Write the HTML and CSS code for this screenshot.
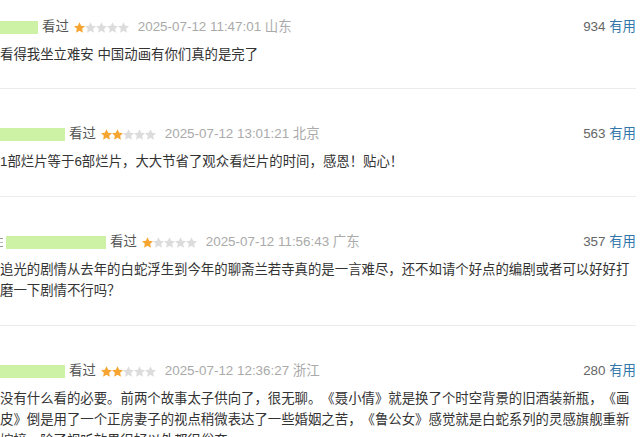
FILE: index.html
```html
<!DOCTYPE html>
<html lang="zh-CN">
<head>
    <meta charset="UTF-8">
    <meta name="viewport" content="width=device-width, initial-scale=1.0">
    <title>短评</title>
    <link rel="stylesheet" href="styles.css">
</head>
<body>
    <svg class="defs" width="0" height="0">
        <defs>
            <polygon id="star" points="5.5,0.2 7.15,3.73 11.02,4.21 8.16,6.87 8.91,10.69 5.5,8.8 2.09,10.69 2.84,6.87 0,4.21 3.85,3.73"/>
        </defs>
    </svg>

    <div class="comments">
        <div class="comment">
            <div class="comment-info">
                <span class="user"><span class="mask mask-s"></span></span>
                <span class="status">看过</span>
                <span class="rating">
                    <svg width="56" height="11" viewBox="0 0 56 11">
                        <use href="#star" class="on"/>
                        <use href="#star" x="11" class="off"/>
                        <use href="#star" x="22" class="off"/>
                        <use href="#star" x="33" class="off"/>
                        <use href="#star" x="44" class="off"/>
                    </svg>
                </span>
                <span class="time">2025-07-12 11:47:01 山东</span>
                <span class="votes"><span class="count">934</span> <a class="useful">有用</a></span>
            </div>
            <p class="comment-text">看得我坐立难安 中国动画有你们真的是完了</p>
        </div>

        <div class="comment">
            <div class="comment-info">
                <span class="user"><span class="mask mask-m"></span></span>
                <span class="status">看过</span>
                <span class="rating">
                    <svg width="56" height="11" viewBox="0 0 56 11">
                        <use href="#star" class="on"/>
                        <use href="#star" x="11" class="on"/>
                        <use href="#star" x="22" class="off"/>
                        <use href="#star" x="33" class="off"/>
                        <use href="#star" x="44" class="off"/>
                    </svg>
                </span>
                <span class="time">2025-07-12 13:01:21 北京</span>
                <span class="votes"><span class="count">563</span> <a class="useful">有用</a></span>
            </div>
            <p class="comment-text">1部烂片等于6部烂片，大大节省了观众看烂片的时间，感恩！贴心！</p>
        </div>

        <div class="comment">
            <div class="comment-info">
                <span class="user"><span class="avatar-bit"></span><span class="mask mask-l"></span></span>
                <span class="status">看过</span>
                <span class="rating">
                    <svg width="56" height="11" viewBox="0 0 56 11">
                        <use href="#star" class="on"/>
                        <use href="#star" x="11" class="off"/>
                        <use href="#star" x="22" class="off"/>
                        <use href="#star" x="33" class="off"/>
                        <use href="#star" x="44" class="off"/>
                    </svg>
                </span>
                <span class="time">2025-07-12 11:56:43 广东</span>
                <span class="votes"><span class="count">357</span> <a class="useful">有用</a></span>
            </div>
            <p class="comment-text">追光的剧情从去年的白蛇浮生到今年的聊斋兰若寺真的是一言难尽，还不如请个好点的编剧或者可以好好打磨一下剧情不行吗？</p>
        </div>

        <div class="comment">
            <div class="comment-info">
                <span class="user"><span class="mask mask-m"></span></span>
                <span class="status">看过</span>
                <span class="rating">
                    <svg width="56" height="11" viewBox="0 0 56 11">
                        <use href="#star" class="on"/>
                        <use href="#star" x="11" class="on"/>
                        <use href="#star" x="22" class="off"/>
                        <use href="#star" x="33" class="off"/>
                        <use href="#star" x="44" class="off"/>
                    </svg>
                </span>
                <span class="time">2025-07-12 12:36:27 浙江</span>
                <span class="votes"><span class="count">280</span> <a class="useful">有用</a></span>
            </div>
            <p class="comment-text">没有什么看的必要。前两个故事太子供向了，很无聊。《聂小倩》就是换了个时空背景的旧酒装新瓶，《画皮》倒是用了一个正房妻子的视点稍微表达了一些婚姻之苦，《鲁公女》感觉就是白蛇系列的灵感旗舰重新嫁接，除了视听效果很好以外都很俗套。</p>
        </div>
    </div>
</body>
</html>
```

FILE: styles.css
```css
body { margin: 0; background: #fff; font-family: "Liberation Sans", "Noto Sans CJK SC", sans-serif; font-size: 13.4px; color: #333; overflow: hidden; text-spacing-trim: space-all; }
.defs { position: absolute; }
.comments { width: 636px; }
.comment { padding: 35px 0 24px; border-bottom: 1px solid #ececec; }
.comment:first-child { padding-top: 17px; padding-bottom: 23px; }
.comment-info { display: flex; align-items: center; height: 20px; line-height: 20px; white-space: nowrap; }
.user { display: flex; align-items: center; margin-right: 4px; }
.mask { display: inline-block; height: 13px; background: #cdf2a6; }
.mask-s { width: 38px; }
.mask-m { width: 65px; }
.mask-l { width: 100px; }
.avatar-bit { width: 3px; height: 9px; margin-right: 3px; border-top: 1px solid #999; border-bottom: 1px solid #999; box-sizing: border-box; background: linear-gradient(#bbb, #bbb) center / 3px 1px no-repeat; }
.status { color: #555; margin-right: 5px; }
.rating { display: flex; margin-right: 8px; }
.rating svg { display: block; overflow: visible; }
.rating .on { fill: #f7a531; }
.rating .off { fill: #dcdcdc; }
.time { color: #aaa; }
.votes { margin-left: auto; color: #666; }
.useful { color: #3377aa; text-decoration: none; }
.comment-text { margin: 7px 0 0; line-height: 21px; }
```
